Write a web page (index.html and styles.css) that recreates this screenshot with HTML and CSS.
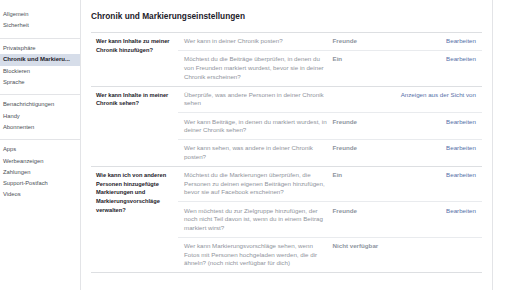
FILE: index.html
```html
<!DOCTYPE html>
<html lang="de">
<head>
    <meta charset="UTF-8">
    <meta name="viewport" content="width=device-width, initial-scale=1.0">
    <title>Chronik und Markierungseinstellungen</title>
    <link rel="stylesheet" href="styles.css">
</head>
<body>
    <div class="page">
        <div class="sidebar">
            <ul class="nav-group">
                <li>Allgemein</li>
                <li>Sicherheit</li>
            </ul>
            <ul class="nav-group">
                <li>Privatsphäre</li>
                <li class="selected">Chronik und Markieru...</li>
                <li>Blockieren</li>
                <li>Sprache</li>
            </ul>
            <ul class="nav-group">
                <li>Benachrichtigungen</li>
                <li>Handy</li>
                <li>Abonnenten</li>
            </ul>
            <ul class="nav-group last">
                <li>Apps</li>
                <li>Werbeanzeigen</li>
                <li>Zahlungen</li>
                <li>Support-Postfach</li>
                <li>Videos</li>
            </ul>
        </div>

        <div class="content">
            <h2 class="title">Chronik und Markierungseinstellungen</h2>

            <div class="settings">
                <div class="section">
                    <div class="section-label">Wer kann Inhalte zu meiner Chronik hinzufügen?</div>
                    <div class="rows">
                        <div class="row">
                            <div class="question">Wer kann in deiner Chronik posten?</div>
                            <div class="value">Freunde</div>
                            <a class="action" href="#">Bearbeiten</a>
                        </div>
                        <div class="row">
                            <div class="question">Möchtest du die Beiträge überprüfen, in denen du von Freunden markiert wurdest, bevor sie in deiner Chronik erscheinen?</div>
                            <div class="value">Ein</div>
                            <a class="action" href="#">Bearbeiten</a>
                        </div>
                    </div>
                </div>

                <div class="section">
                    <div class="section-label">Wer kann Inhalte in meiner Chronik sehen?</div>
                    <div class="rows">
                        <div class="row">
                            <div class="question">Überprüfe, was andere Personen in deiner Chronik sehen</div>
                            <div class="value"></div>
                            <a class="action" href="#">Anzeigen aus der Sicht von</a>
                        </div>
                        <div class="row">
                            <div class="question">Wer kann Beiträge, in denen du markiert wurdest, in deiner Chronik sehen?</div>
                            <div class="value">Freunde</div>
                            <a class="action" href="#">Bearbeiten</a>
                        </div>
                        <div class="row">
                            <div class="question">Wer kann sehen, was andere in deiner Chronik posten?</div>
                            <div class="value">Freunde</div>
                            <a class="action" href="#">Bearbeiten</a>
                        </div>
                    </div>
                </div>

                <div class="section">
                    <div class="section-label">Wie kann ich von anderen Personen hinzugefügte Markierungen und Markierungsvorschläge verwalten?</div>
                    <div class="rows">
                        <div class="row">
                            <div class="question">Möchtest du die Markierungen überprüfen, die Personen zu deinen eigenen Beiträgen hinzufügen, bevor sie auf Facebook erscheinen?</div>
                            <div class="value">Ein</div>
                            <a class="action" href="#">Bearbeiten</a>
                        </div>
                        <div class="row">
                            <div class="question">Wen möchtest du zur Zielgruppe hinzufügen, der noch nicht Teil davon ist, wenn du in einem Beitrag markiert wirst?</div>
                            <div class="value">Freunde</div>
                            <a class="action" href="#">Bearbeiten</a>
                        </div>
                        <div class="row">
                            <div class="question">Wer kann Markierungsvorschläge sehen, wenn Fotos mit Personen hochgeladen werden, die dir ähneln? (noch nicht verfügbar für dich)</div>
                            <div class="value">Nicht verfügbar</div>
                            <div class="action"></div>
                        </div>
                    </div>
                </div>
            </div>
        </div>
    </div>
</body>
</html>
```

FILE: styles.css
```css
body {
    margin: 0;
    background: #fff;
    font-family: "Liberation Sans", Arial, sans-serif;
    color: #1d2129;
}
.page {
    display: flex;
    height: 290px;
}
.sidebar {
    width: 80px;
    border-right: 1px solid #e3e4e7;
    padding-top: 4.8px;
}
.nav-group {
    list-style: none;
    margin: 0;
    padding: 4.5px 0 6px;
    border-bottom: 1px solid #e3e4e7;
}
.nav-group.last {
    border-bottom: none;
}
.nav-group li {
    height: 11.2px;
    line-height: 11.2px;
    padding-left: 3px;
    font-size: 5.8px;
    color: #4b4f56;
    white-space: nowrap;
}
.nav-group li.selected {
    background: #d6dde9;
    font-weight: bold;
    font-size: 6px;
    color: #1d2129;
}
.content {
    width: 391px;
    padding: 11px 10px 0;
    border-right: 1px solid #e3e4e7;
}
.title {
    margin: 0 0 11px;
    font-size: 8.3px;
    line-height: 10px;
    font-weight: bold;
    color: #1d2129;
}
.settings {
    border-bottom: 1px solid #dddfe2;
}
.section {
    display: flex;
    border-top: 1px solid #dddfe2;
}
.section-label {
    width: 77px;
    padding: 4.3px 5px;
    font-size: 5.7px;
    line-height: 8.6px;
    font-weight: bold;
    color: #1d2129;
}
.rows {
    flex: 1;
}
.row {
    display: grid;
    grid-template-columns: 144.5px 1fr auto;
    column-gap: 4px;
    padding: 4.3px 6px;
    font-size: 6.2px;
    line-height: 8.6px;
    border-top: 1px solid #e9ebee;
}
.row:first-child {
    border-top: none;
}
.question {
    color: #90949c;
}
.value {
    color: #8d949e;
    font-weight: bold;
}
.action {
    color: #5670a8;
    text-decoration: none;
    text-align: right;
}
```
